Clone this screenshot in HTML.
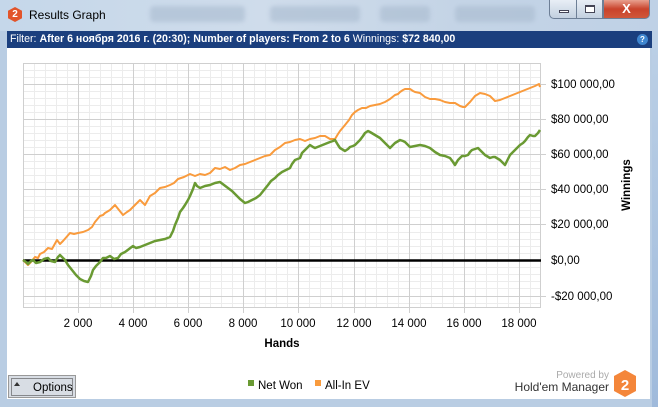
<!DOCTYPE html><html><head><meta charset="utf-8"><style>
*{margin:0;padding:0;box-sizing:border-box}
body{width:658px;height:407px;overflow:hidden;background:#b9cde3;font-family:"Liberation Sans",sans-serif;position:relative}
.tb{position:absolute;left:0;top:0;width:658px;height:31px;background:linear-gradient(90deg,#c5d7ea,#cfdceb 40%,#c4d4e6 70%,#bfd1e6)}
.blur{position:absolute;top:6px;height:16px;border-radius:4px;background:#a9bbcf;opacity:.6;filter:blur(2px)}
.logo{position:absolute;left:8px;top:7px;width:14px;height:15px;background:#e2542a;clip-path:polygon(50% 0,100% 25%,100% 75%,50% 100%,0 75%,0 25%);color:#fff;font:bold 10px "Liberation Sans";text-align:center;line-height:15px}
.title{position:absolute;left:29px;top:8px;font-size:12px;color:#000}
.btn{position:absolute;top:0;height:19px;border:1px solid #6d7f96;border-top:none}
.fb{position:absolute;left:7px;top:31px;width:645px;height:17px;background:#1b3f7e;color:#fff;font-size:10.6px;line-height:17px;padding-left:3px;white-space:nowrap}
.fb b{font-weight:bold}
.content{position:absolute;left:7px;top:48px;width:643px;height:351px;background:#fff}
.side{position:absolute;right:0;top:31px;width:6px;height:376px;background:linear-gradient(#bcd0e6,#9fbadb)}
</style></head><body>
<div class="tb"></div>
<div class="blur" style="left:150px;width:95px"></div>
<div class="blur" style="left:270px;width:90px"></div>
<div class="blur" style="left:380px;width:50px"></div>
<div class="blur" style="left:455px;width:80px"></div>
<div class="logo">2</div>
<div class="title">Results Graph</div>
<div class="btn" style="left:549px;width:28px;background:linear-gradient(#e8eef6,#c3d0df);border-radius:0 0 0 5px"><div style="position:absolute;left:9px;top:10px;width:10px;height:3px;background:#fff;border:1px solid #445"></div></div>
<div class="btn" style="left:576px;width:27px;background:linear-gradient(#e8eef6,#c3d0df)"><div style="position:absolute;left:8px;top:5px;width:10px;height:8px;border:1px solid #445;border-top-width:2px;background:#fff"></div></div>
<div class="btn" style="left:603px;width:47px;background:linear-gradient(#e8a08e,#c9432b 50%,#d0573a);border-radius:0 0 5px 0;color:#fff;font:bold 13px 'Liberation Sans';text-align:center;line-height:17px">X</div>
<div class="fb">Filter: <b>After 6 ноября 2016 г. (20:30); Number of players: From 2 to 6</b> Winnings: <b>$72 840,00</b>
<span style="position:absolute;right:4px;top:3px;width:11px;height:11px;border-radius:50%;background:#3f86cf;font-size:8px;line-height:11px;text-align:center;font-weight:bold">?</span></div>
<div class="content"></div>
<div class="side"></div>
<svg style="position:absolute;left:0;top:0" width="658" height="407">
<g stroke="#ececec" stroke-width="1">
<path d="M34.5 63V307M45.5 63V307M56.5 63V307M67.5 63V307M89.5 63V307M100.5 63V307M111.5 63V307M122.5 63V307M144.5 63V307M155.5 63V307M166.5 63V307M177.5 63V307M199.5 63V307M210.5 63V307M221.5 63V307M232.5 63V307M254.5 63V307M265.5 63V307M276.5 63V307M287.5 63V307M309.5 63V307M320.5 63V307M331.5 63V307M342.5 63V307M365.5 63V307M376.5 63V307M387.5 63V307M398.5 63V307M420.5 63V307M431.5 63V307M442.5 63V307M453.5 63V307M475.5 63V307M486.5 63V307M497.5 63V307M508.5 63V307M530.5 63V307"/>
<path d="M23 70.5H541M23 77.5H541M23 91.5H541M23 98.5H541M23 105.5H541M23 112.5H541M23 126.5H541M23 133.5H541M23 140.5H541M23 147.5H541M23 161.5H541M23 168.5H541M23 175.5H541M23 182.5H541M23 196.5H541M23 203.5H541M23 210.5H541M23 217.5H541M23 232.5H541M23 239.5H541M23 246.5H541M23 253.5H541M23 267.5H541M23 274.5H541M23 281.5H541M23 288.5H541M23 303.5H541"/>
</g>
<g stroke="#cfcfcf" stroke-width="1">
<path d="M78.5 63V313M133.5 63V313M188.5 63V313M243.5 63V313M298.5 63V313M354.5 63V313M409.5 63V313M464.5 63V313M519.5 63V313"/>
<path d="M23 84.5H546M23 119.5H546M23 154.5H546M23 189.5H546M23 224.5H546M23 296.5H546"/>
<rect x="23.5" y="63.5" width="517" height="244" fill="none"/>
</g>
<path d="M23 260.5H541" stroke="#000" stroke-width="2.5"/>
<polyline fill="none" stroke="#f99b3d" stroke-width="2" stroke-linejoin="round" points="23,260 26,263 28,265 31,262 35,257 38,258 40,254 44,252 48,248 52,249 57,240 60,244 63,241 70,233 74,234 78,233 83,232 88,230 92,227 95,222 100,216 103,215 105,213 110,210 115,205 119,210 123,215 127,212 130,210 135,205 140,200 143,203 145,205 150,196 155,193 160,188 165,187 170,185 174,183 178,179 184,177 190,174 195,176 200,174 205,175 210,173 215,168 220,169 225,167 230,170 235,168 240,165 245,164 250,162 255,160 260,158 265,156 270,155 275,150 280,147 285,143 290,142 295,140 300,139 305,141 310,139 315,138 320,136 325,136 330,139 335,139 338,134 340,131 345,125 349,120 352,115 355,112 358,110 362,108 366,108 370,106 375,105 380,104 385,102 390,99 395,95 398,94 400,92 403,90 405,89 410,89 413,91 415,92 420,93 425,97 430,99 435,99 440,100 445,102 450,103 455,103 460,106 463,107 465,107 468,104 470,102 475,96 480,93 485,94 490,96 495,101 500,100 505,98 510,96 515,94 520,92 525,90 530,88 535,86 539,84 540,87"/>
<polyline fill="none" stroke="#6a9a33" stroke-width="2.5" stroke-linejoin="round" points="23,260 26,262 28,264 31,261 33,260 36,263 40,262 44,259 48,258 51,261 55,262 58,257 60,255 63,258 65,260 68,265 72,270 76,275 80,279 84,281 88,282 91,276 93,270 96,266 100,262 103,258 106,258 110,256 114,259 118,258 121,254 125,252 129,249 133,246 136,248 140,247 145,245 150,243 155,241 160,240 165,239 170,237 173,231 175,225 178,218 180,212 183,208 185,205 188,200 190,196 193,189 195,183 197,186 200,188 205,186 210,185 215,183 220,182 224,185 228,188 232,191 235,194 240,199 245,203 248,202 252,200 256,198 260,195 264,190 268,185 271,181 275,178 278,175 282,172 286,170 290,168 292,164 295,160 300,158 302,153 305,150 308,147 310,145 313,147 315,148 320,146 325,144 330,142 333,141 335,140 338,145 340,148 345,151 348,149 350,147 353,146 355,145 358,142 360,140 363,136 365,133 368,131 370,132 375,135 380,138 385,143 390,148 395,143 400,140 403,141 405,142 408,145 410,147 415,146 420,145 425,146 430,148 435,152 440,155 445,156 450,158 453,162 455,165 458,160 462,156 465,156 468,155 470,152 472,150 475,149 478,148 482,152 485,155 490,158 493,157 495,157 500,160 503,163 505,165 508,159 510,155 513,152 515,150 518,147 520,145 523,143 525,141 528,137 530,135 533,136 535,136 538,133 540,130"/>
<g font-family="Liberation Sans" font-size="11.5" fill="#000">
<text x="78" y="327" text-anchor="middle">2 000</text><text x="133" y="327" text-anchor="middle">4 000</text><text x="188" y="327" text-anchor="middle">6 000</text><text x="243" y="327" text-anchor="middle">8 000</text><text x="298" y="327" text-anchor="middle">10 000</text><text x="354" y="327" text-anchor="middle">12 000</text><text x="409" y="327" text-anchor="middle">14 000</text><text x="464" y="327" text-anchor="middle">16 000</text><text x="519" y="327" text-anchor="middle">18 000</text>
<text x="551" y="88">$100 000,00</text><text x="551" y="123">$80 000,00</text><text x="551" y="158">$60 000,00</text><text x="551" y="193">$40 000,00</text><text x="551" y="228">$20 000,00</text><text x="551" y="264">$0,00</text><text x="551" y="300">-$20 000,00</text>
<text x="282" y="347" font-weight="bold" text-anchor="middle">Hands</text>
<text transform="translate(630,185) rotate(-90)" font-weight="bold" text-anchor="middle">Winnings</text>
<text x="258" y="389">Net Won</text><text x="325" y="389">All-In EV</text>
<text x="609" y="378" font-size="10" fill="#aaa" text-anchor="end">Powered by</text>
<text x="609" y="391" font-size="12" fill="#333" text-anchor="end">Hold'em Manager</text>
</g>
<rect x="248" y="380" width="6" height="6" fill="#6a9a33"/><rect x="315" y="380" width="6" height="6" fill="#f99b3d"/>
<polygon points="625,370 636,376 636,391 625,397 614,391 614,376" fill="#f4863a"/>
<text x="625" y="390" font-family="Liberation Sans" font-weight="bold" font-size="15" fill="#fff" text-anchor="middle">2</text>
<rect x="8.5" y="375.5" width="67" height="22" fill="#d8dde4" stroke="#999"/>
<rect x="11.5" y="378.5" width="61" height="17" fill="none" stroke="#333" stroke-dasharray="1,1"/>
<path d="M14 386l3-4 3 4z" fill="#333"/>
<text x="33" y="391" font-family="Liberation Sans" font-size="11.5">Options</text>
</svg>
</body></html>
